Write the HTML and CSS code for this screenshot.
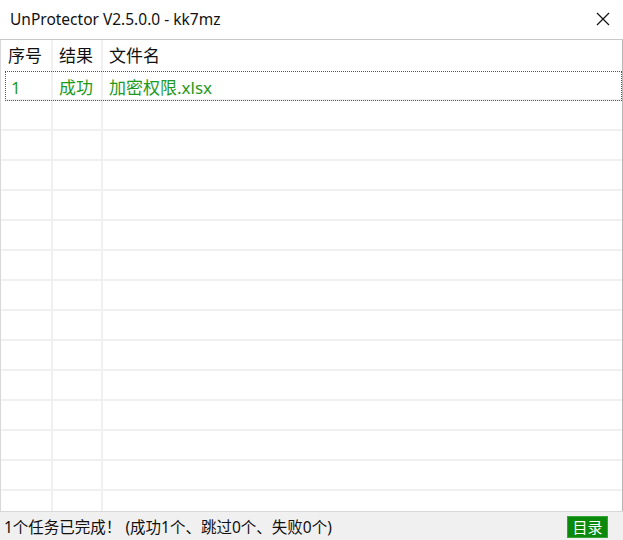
FILE: index.html
```html
<!DOCTYPE html>
<html>
<head>
    <title>UnProtector</title>
    <meta charset="utf-8" />
    <link rel="stylesheet" href="styles.css">
</head>
<body>
    <div class="window">
        <div class="titlebar">
            <span class="title">UnProtector V2.5.0.0 - kk7mz</span>
            <svg class="close" width="14" height="14" viewBox="0 0 14 14">
                <path d="M1 1 L13 13 M13 1 L1 13" stroke="#111" stroke-width="1.2" fill="none" />
            </svg>
        </div>

        <div class="list">
            <div class="row head">
                <div class="cell">序号</div>
                <div class="cell">结果</div>
                <div class="cell">文件名</div>
            </div>
            <div class="row item selected">
                <div class="cell">1</div>
                <div class="cell">成功</div>
                <div class="cell">加密权限.xlsx</div>
            </div>
            <div id="empty-rows"></div>
        </div>

        <div class="statusbar">
            <span class="status-text">1个任务已完成！ (成功1个、跳过0个、失败0个)</span>
            <button class="dir-btn">目录</button>
        </div>
    </div>

    <script>
        const empty = document.getElementById('empty-rows');
        for (let i = 0; i < 14; i++) {
            const row = document.createElement('div');
            row.className = 'row';
            row.innerHTML = '<div class="cell"></div><div class="cell"></div><div class="cell"></div>';
            empty.appendChild(row);
        }
    </script>
</body>
</html>
```

FILE: styles.css
```css
body {
    margin: 0;
    font-family: "Noto Sans", "Noto Sans CJK SC", sans-serif;
    background-color: #1f3a66;
}

.window {
    width: 623px;
    height: 540px;
    display: flex;
    flex-direction: column;
    background-color: #fff;
    overflow: hidden;
}

.titlebar {
    height: 40px;
    flex: none;
    display: flex;
    align-items: center;
    justify-content: space-between;
    padding: 0 13px 0 10px;
    border-bottom: 1px solid #c8c8c8;
    box-sizing: border-box;
    background-color: #fff;
}

.title {
    font-size: 15.5px;
    color: #111;
    margin-top: -2px;
}

.close {
    margin-top: -1px;
}

.list {
    flex: 1;
    border-left: 1px solid #d8d8dc;
    border-right: 1px solid #b8b8b8;
    overflow: hidden;
}

.row {
    display: grid;
    grid-template-columns: 52px 50px 1fr;
    height: 30px;
    box-sizing: border-box;
    border-bottom: 2px solid #f0f0f0;
}

.row.head {
    border-bottom: none;
    height: 31px;
}

.cell {
    border-right: 2px solid #f0f0f0;
    padding-left: 7px;
    font-size: 17px;
    line-height: 32px;
    color: #111;
    white-space: nowrap;
}

.cell:last-child {
    border-right: none;
}

.item .cell {
    color: #1e9a1e;
    line-height: 34px;
}

.item.selected {
    outline: 1px dotted #555;
    outline-offset: -1px;
    margin-left: 4px;
    grid-template-columns: 48px 50px 1fr;
}

.item.selected .cell:first-child {
    padding-left: 6px;
}

.row.head .cell:nth-child(2),
.row.head .cell:nth-child(3),
.item .cell:nth-child(2),
.item .cell:nth-child(3) {
    padding-left: 6px;
}

.statusbar {
    height: 28px;
    flex: none;
    display: flex;
    align-items: center;
    justify-content: space-between;
    padding: 0 15px 0 4px;
    background-color: #f0f0f0;
    border-top: 1px solid #d8d8d8;
}

.status-text {
    font-size: 15.5px;
    color: #111;
    white-space: pre;
    margin-top: 1px;
}

.dir-btn {
    font-family: "Noto Sans CJK SC", sans-serif;
    font-size: 15px;
    color: #fff;
    background-color: #0a890a;
    border: 1px solid #3aa03a;
    width: 41px;
    height: 22px;
    padding: 0;
    line-height: 20px;
    margin-top: 1px;
}
```
